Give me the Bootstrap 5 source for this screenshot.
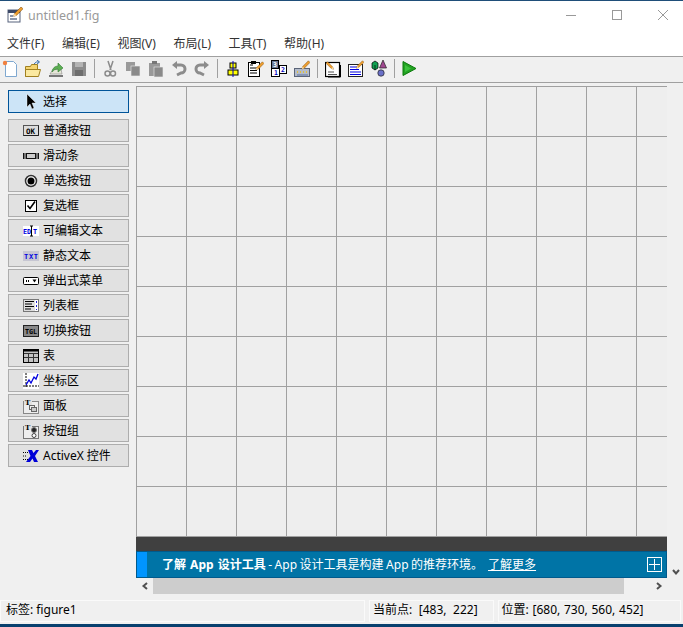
<!DOCTYPE html>
<html lang="zh-CN">
<head>
    <meta charset="UTF-8">
    <meta name="viewport" content="width=device-width, initial-scale=1.0">
    <title>untitled1.fig</title>
    <link rel="stylesheet" href="https://cdn.jsdelivr.net/npm/bootstrap@5.3.0/dist/css/bootstrap.min.css">
    <style>
        html, body {
            height: 627px;
            overflow: hidden;
        }
        body {
            width: 683px;
            background: #f0f0f0;
            color: #000;
            font-family: "Noto Sans", "Noto Sans CJK SC", sans-serif;
            font-size: 12px;
            line-height: 16px;
        }
        svg { display: block; flex: none; }
        .win-title {
            height: 31px;
            background: #fff;
            border-top: 1px solid #1f4e79;
            padding: 6px 0 0 7px;
        }
        .win-name { color: #999; margin-left: 5px; font-size: 12.5px; padding-top: 1px; }
        .win-btns { gap: 30px; padding: 3px 12px 0 0; }
        .win-menu {
            height: 26px;
            background: #fff;
            border-bottom: 1px solid #a0a0a0;
            padding: 5px 0 0 7px;
            gap: 17.6px;
            color: #333;
        }
        .tool-row {
            height: 26px;
            border-bottom: 1px solid #a0a0a0;
            padding: 3px 0 0 2px;
            gap: 7px;
        }
        .tool-sep { width: 1px; height: 19px; margin-top: -1px; background: #a0a0a0; }
        .main-area { height: 515px; }
        .palette { width: 136px; padding: 7px 0 0 8px; gap: 2px; flex: none; }
        .pal-btn {
            width: 121px;
            height: 23px;
            padding: 0 0 0 14px;
            gap: 4px;
            background: #e1e1e1;
            border: 1px solid #adadad;
            border-radius: 0;
            font-size: 12px;
            line-height: 16px;
            color: #000;
            white-space: nowrap;
        }
        .pal-btn.picked {
            background: #cce4f7;
            border-color: #005499;
            margin-bottom: 4px;
        }
        .design-col { width: 531px; padding-top: 3px; flex: none; }
        .grid-canvas {
            height: 452px;
            background-color: #eee;
            background-image:
                linear-gradient(#a0a0a0 1px, transparent 1px),
                linear-gradient(90deg, #a0a0a0 1px, transparent 1px);
            background-size: 50px 50px;
        }
        .dark-strip { height: 14px; background: #404040; margin-top: -1px; }
        .app-banner {
            height: 27px;
            background: #0074a6;
            border: 1px solid #005a8c;
            color: #fff;
            padding-right: 4px;
        }
        .banner-mark { width: 10px; height: 100%; background: #0095ff; margin-right: 15px; }
        .banner-msg { white-space: nowrap; word-spacing: -.6px; }
        .banner-msg b { word-spacing: 1px; }
        .banner-msg a { color: #fff; margin-left: 5px; }
        .h-scroll { height: 16px; }
        .h-arrow { width: 17px; }
        .h-track { width: 471px; height: 16px; background: #cdcdcd; }
        .v-scroll { width: 16px; padding: 0 0 0 5px; }
        .v-down { margin-top: 485px; }
        .status-row { height: 22px; margin-top: 2px; gap: 4px; padding-right: 2px; }
        .status-cell {
            border: 1px solid #fafafa;
            padding: 1px 0 0 5px;
            white-space: nowrap;
        }
        .status-a { width: 366px; }
        .status-b { width: 125px; padding-left: 3px; word-spacing: 3.500px; }
        .status-c { width: 184px; padding-left: 3px; word-spacing: .6px; }
        .task-edge { height: 4px; margin-top: 2px; background: #08406e; }
        .ico-txt { font-family: "DejaVu Sans Mono", monospace; font-weight: 700; }
    </style>
</head>
<body>
    <svg width="0" height="0" class="position-absolute">
        <symbol id="pencil" viewBox="0 0 16 16">
            <path d="M14 1l2 2-7 7-3 1 1-3z" fill="#f0a030" stroke="#7a4a10" stroke-width=".6"/>
            <path d="M6 11l1-3 2 2z" fill="#fbe0a8"/>
        </symbol>
    </svg>

    <div class="win-title d-flex justify-content-between">
        <div class="d-flex">
            <svg width="16" height="16" viewBox="0 0 16 16">
                <rect x="1" y="3" width="12" height="12" fill="#fff" stroke="#56627c"/>
                <rect x="1" y="3" width="12" height="3" fill="#3d4a68"/>
                <rect x="3" y="8" width="3" height="2" fill="#8c96aa"/>
                <rect x="3" y="11" width="7" height="2" fill="#8c96aa"/>
                <use href="#pencil" x="1" y="-1" width="15" height="15"/>
            </svg>
            <span class="win-name">untitled1.fig</span>
        </div>
        <div class="win-btns d-flex">
            <svg width="16" height="11" viewBox="0 0 16 11"><path d="M3 5.5h10" stroke="#999"/></svg>
            <svg width="16" height="11" viewBox="0 0 16 11"><rect x="3.5" y=".5" width="9" height="9" fill="none" stroke="#999"/></svg>
            <svg width="16" height="11" viewBox="0 0 16 11"><path d="M3 0l10 10M13 0L3 10" stroke="#999"/></svg>
        </div>
    </div>

    <div class="win-menu d-flex">
        <span>文件(F)</span><span>编辑(E)</span><span>视图(V)</span><span>布局(L)</span><span>工具(T)</span><span>帮助(H)</span>
    </div>

    <div class="tool-row d-flex">
        <svg width="16" height="18" viewBox="0 0 16 18"><path d="M3.5 1.5h8l3 3v12h-11z" fill="#fff" stroke="#7fa8d0"/><circle cx="3" cy="3" r="2.2" fill="#f08040"/></svg>
        <svg width="16" height="18" viewBox="0 0 16 18"><path d="M.5 6.5h5l1-2h6v12H.5z" fill="#f4d470" stroke="#a08020"/><path d="M.5 9.5h15l-2 7H.5z" fill="#fbe9a0" stroke="#a08020"/><path d="M9 4q2-3 5-2M12 0l2.500 2-2.500 2" fill="none" stroke="#3a70b0"/></svg>
        <svg width="16" height="18" viewBox="0 0 16 18"><path d="M1 15h14v2H1z" fill="#777"/><path d="M2 14l3-5h8l1 5z" fill="#e6e6d8" stroke="#888" stroke-width=".6"/><path d="M4 12q1-6 6-6V3l5 5-5 4V9q-4 0-6 3z" fill="#5cae52" stroke="#2f7a30" stroke-width=".6"/></svg>
        <svg width="16" height="18" viewBox="0 0 16 18"><path d="M1 2h14v14H1z" fill="#8c8c8c"/><rect x="4" y="2" width="8" height="5" fill="#b4b4b4"/><rect x="4" y="10" width="8" height="6" fill="#6e6e6e"/></svg>
        <div class="tool-sep"></div>
        <svg width="16" height="18" viewBox="0 0 16 18"><path d="M6 1l3 9M11 1L8 10" stroke="#8c8c8c" stroke-width="1.500"/><circle cx="5.500" cy="13.500" r="2.500" fill="none" stroke="#8c8c8c" stroke-width="1.500"/><circle cx="11" cy="13.500" r="2.500" fill="none" stroke="#8c8c8c" stroke-width="1.500"/></svg>
        <svg width="16" height="18" viewBox="0 0 16 18"><rect x="1" y="2" width="9" height="9" fill="#999"/><rect x="6" y="6" width="9" height="10" fill="#8a8a8a" stroke="#eee" stroke-width=".6"/></svg>
        <svg width="16" height="18" viewBox="0 0 16 18"><rect x="1" y="3" width="11" height="13" fill="#999"/><rect x="4" y="1" width="5" height="3" fill="#777"/><rect x="6" y="7" width="9" height="10" fill="#8a8a8a" stroke="#eee" stroke-width=".6"/></svg>
        <svg width="16" height="18" viewBox="0 0 16 18"><path d="M5 5h5a3.500 3.500 0 0 1 0 8l-4 2" fill="none" stroke="#8c8c8c" stroke-width="3"/><path d="M6 1v8L1 5z" fill="#8c8c8c"/></svg>
        <svg width="16" height="18" viewBox="0 0 16 18"><path d="M11 5H6a3.500 3.500 0 0 0 0 8l4 2" fill="none" stroke="#8c8c8c" stroke-width="3"/><path d="M10 1v8l5-4z" fill="#8c8c8c"/></svg>
        <div class="tool-sep"></div>
        <svg width="16" height="18" viewBox="0 0 16 18"><rect x="5" y="3" width="6" height="5" fill="#ffff00" stroke="#000"/><rect x="3" y="10" width="10" height="5" fill="#ffff00" stroke="#000"/><path d="M8 1v16" stroke="#0000c0"/></svg>
        <svg width="16" height="18" viewBox="0 0 16 18"><rect x=".5" y="2.500" width="11" height="14" fill="#fff" stroke="#000"/><path d="M2 5h3M2 8h7M2 10.500h7M2 13h7" stroke="#000" stroke-width="1.200"/><rect x="3" y="1" width="5" height="3" fill="#000"/><use href="#pencil" x="3" y="1" width="13" height="13"/></svg>
        <svg width="16" height="18" viewBox="0 0 16 18">
            <rect x=".5" y=".5" width="7" height="8" fill="#6a7a96" stroke="#000"/><rect x=".5" y="8.500" width="8" height="8" fill="#fff" stroke="#000"/><rect x="8.500" y="5.500" width="7" height="8" fill="#fff" stroke="#000"/>
            <text x="2" y="7" class="ico-txt" font-size="6.500" fill="#fff">3</text>
            <text x="3" y="15" class="ico-txt" font-size="6.500" fill="#0000c0">1</text>
            <text x="10" y="12" class="ico-txt" font-size="6.500" fill="#0000c0">2</text>
        </svg>
        <svg width="16" height="18" viewBox="0 0 16 18"><rect x=".5" y="8.500" width="15" height="8" fill="#b4bccb" stroke="#5a6478"/><path d="M3 12h1M6 12h1M9 12h1M12 12h1" stroke="#e0c040" stroke-width="2"/><path d="M3 15h11" stroke="#5a70a0"/><use href="#pencil" x="3" y="0" width="13" height="13"/></svg>
        <div class="tool-sep"></div>
        <svg width="16" height="18" viewBox="0 0 16 18"><rect x=".5" y="2.500" width="14" height="14" fill="#fff" stroke="#000" stroke-width="1.200"/><path d="M3 12h6M3 14.500h9" stroke="#555"/><path d="M15.500 5v12H3" fill="none" stroke="#000"/><use href="#pencil" x="0" y="0" width="12" height="12" transform="matrix(-1 0 0 1 13 1)"/></svg>
        <svg width="16" height="18" viewBox="0 0 16 18"><rect x=".5" y="4.500" width="14" height="12" fill="#fff" stroke="#222"/><path d="M2 7h8M2 9.500h9M2 12h11M2 14.500h11" stroke="#0000e0" stroke-width="1.200"/><use href="#pencil" x="4" y="0" width="12" height="12"/></svg>
        <svg width="16" height="18" viewBox="0 0 16 18"><path d="M1 3l3-2 3 2v5l-3 2-3-2z" fill="#10a050" stroke="#000" stroke-width=".7"/><path d="M4 5v5" stroke="#000" stroke-width=".7"/><path d="M12 0l3.500 8h-7z" fill="#a04890" stroke="#222" stroke-width=".7"/><circle cx="10" cy="13" r="3.200" fill="#6a70c8" stroke="#222" stroke-width=".7"/></svg>
        <div class="tool-sep"></div>
        <svg width="16" height="18" viewBox="0 0 16 18"><path d="M1 1.500l13 7-13 7z" fill="#23a323" stroke="#0a7a0a"/><path d="M3 5v7l6-3.500z" fill="#3cc23c"/></svg>
    </div>

    <div class="main-area d-flex">
        <div class="palette d-flex flex-column">
            <button class="btn pal-btn picked d-flex align-items-center">
                <svg width="16" height="16" viewBox="0 0 16 16"><path d="M4 0v13l3-3 2 5 2-1-2-5h4z" fill="#000" stroke="#fff" stroke-width=".4"/></svg><span>选择</span>
            </button>
            <button class="btn pal-btn d-flex align-items-center">
                <svg width="16" height="16" viewBox="0 0 16 16"><rect x=".5" y="2.500" width="15" height="10" fill="#ddd" stroke="#555"/><path d="M.5 12.500h15v-10" fill="none" stroke="#222"/><text x="3" y="10.500" class="ico-txt" font-size="7.500">OK</text></svg><span>普通按钮</span>
            </button>
            <button class="btn pal-btn d-flex align-items-center">
                <svg width="16" height="16" viewBox="0 0 16 16"><rect x="0" y="5" width="16" height="6" fill="#111"/><rect x="4" y="6" width="8" height="4" fill="#ccc"/><path d="M2 5v6M14 5v6" stroke="#ddd"/></svg><span>滑动条</span>
            </button>
            <button class="btn pal-btn d-flex align-items-center">
                <svg width="16" height="16" viewBox="0 0 16 16"><circle cx="8" cy="8" r="5.500" fill="#fff" stroke="#333" stroke-width="1.500"/><circle cx="8" cy="8" r="3.500" fill="#000"/></svg><span>单选按钮</span>
            </button>
            <button class="btn pal-btn d-flex align-items-center">
                <svg width="16" height="16" viewBox="0 0 16 16"><rect x="2.500" y="2.500" width="11" height="11" fill="#fff" stroke="#000"/><path d="M4.500 7.500l2.500 3 5-7" fill="none" stroke="#000" stroke-width="1.600"/></svg><span>复选框</span>
            </button>
            <button class="btn pal-btn d-flex align-items-center">
                <svg width="16" height="16" viewBox="0 0 16 16"><rect x="0" y="3" width="16" height="10" fill="#fff"/><text x="0" y="10.800" class="ico-txt" font-size="6.800" fill="#0000e0" textLength="8">ED</text><text x="10" y="10.800" class="ico-txt" font-size="6.800" fill="#0000e0">T</text><path d="M8.500 3v10M7 3h3M7 13h3" stroke="#000"/></svg><span>可编辑文本</span>
            </button>
            <button class="btn pal-btn d-flex align-items-center">
                <svg width="16" height="16" viewBox="0 0 16 16"><rect x="0" y="3" width="16" height="10" fill="#c6c6d2"/><text x="1" y="10.800" class="ico-txt" font-size="7" fill="#0000e0" textLength="14">TXT</text></svg><span>静态文本</span>
            </button>
            <button class="btn pal-btn d-flex align-items-center">
                <svg width="16" height="16" viewBox="0 0 16 16"><rect x=".5" y="4.500" width="15" height="7" rx="1" fill="#fff" stroke="#000"/><path d="M3 8h4" stroke="#000" stroke-width="2" stroke-dasharray="1 1"/><path d="M9.500 6.500h4l-2 3z" fill="#000"/></svg><span>弹出式菜单</span>
            </button>
            <button class="btn pal-btn d-flex align-items-center">
                <svg width="16" height="16" viewBox="0 0 16 16"><rect x=".5" y="1.500" width="15" height="12" fill="#ddd" stroke="#777"/><path d="M2 3.500h9M2 6h7M2 8.500h9M2 11h6" stroke="#000" stroke-width="1.200"/><rect x="12" y="2" width="3" height="11" fill="#fff"/><path d="M13.500 3v9" stroke="#2020d0" stroke-dasharray="2 2"/></svg><span>列表框</span>
            </button>
            <button class="btn pal-btn d-flex align-items-center">
                <svg width="16" height="16" viewBox="0 0 16 16"><rect x=".5" y="2.500" width="15" height="11" fill="#888" stroke="#222"/><text x="2" y="10.800" class="ico-txt" font-size="6.800" fill="#000" textLength="12">TGL</text></svg><span>切换按钮</span>
            </button>
            <button class="btn pal-btn d-flex align-items-center">
                <svg width="16" height="16" viewBox="0 0 16 16"><rect x=".5" y="1.500" width="15" height="13" fill="#c4c4c4" stroke="#000"/><path d="M1 5.500h14M1 9.500h14M5.500 5v9M10.500 5v9" stroke="#333"/><path d="M1 2.500h14" stroke="#000" stroke-width="2"/></svg><span>表</span>
            </button>
            <button class="btn pal-btn d-flex align-items-center">
                <svg width="16" height="16" viewBox="0 0 16 16"><rect width="16" height="16" fill="#fff"/><path d="M3 0v15M0 13h16" stroke="#000" stroke-dasharray="2 1"/><path d="M3 12l3-5 2 3 3-6 2 2 2-5" fill="none" stroke="#0000e0" stroke-width="1.300"/></svg><span>坐标区</span>
            </button>
            <button class="btn pal-btn d-flex align-items-center">
                <svg width="16" height="16" viewBox="0 0 16 16"><rect x=".5" y="3.500" width="15" height="12" fill="#eee" stroke="#888"/><rect x="1" y="0" width="8" height="7" fill="#e1e1e1"/><text x="2" y="6.500" font-family="DejaVu Serif" font-weight="700" font-size="7">T</text><rect x="6.500" y="7.500" width="5" height="4" fill="none" stroke="#666"/><rect x="8.500" y="9.500" width="5" height="4" fill="#ccc" stroke="#666"/></svg><span>面板</span>
            </button>
            <button class="btn pal-btn d-flex align-items-center">
                <svg width="16" height="16" viewBox="0 0 16 16"><rect x=".5" y="3.500" width="15" height="12" fill="#eee" stroke="#777"/><rect x="1" y="0" width="8" height="7" fill="#e1e1e1"/><text x="2" y="6.500" font-family="DejaVu Serif" font-weight="700" font-size="7">T</text><circle cx="11" cy="7" r="2.500" fill="#222" stroke="#777"/><circle cx="11" cy="12.500" r="2" fill="#fff" stroke="#444"/></svg><span>按钮组</span>
            </button>
            <button class="btn pal-btn d-flex align-items-center">
                <svg width="16" height="16" viewBox="0 0 16 16"><path d="M0 4.500h5M0 8h4M0 11.500h5" stroke="#000" stroke-dasharray="1 1"/><path d="M5 2h4l1.500 3L13 2h3l-4 6 3 6h-4l-1.500-3.500L7 14H3l4.500-6z" fill="#0000d8"/></svg><span>ActiveX 控件</span>
            </button>
        </div>

        <div class="design-col">
            <div class="grid-canvas"></div>
            <div class="dark-strip"></div>
            <div class="app-banner d-flex align-items-center">
                <div class="banner-mark"></div>
                <div class="banner-msg flex-grow-1"><b>了解 App 设计工具</b> - App 设计工具是构建 App 的推荐环境。<a href="#">了解更多</a></div>
                <svg width="15" height="15" viewBox="0 0 15 15"><rect x=".5" y=".5" width="14" height="14" fill="none" stroke="#fff"/><path d="M7.500 2v11M2 7.500h11" stroke="#fff"/></svg>
            </div>
            <div class="h-scroll d-flex">
                <div class="h-arrow d-flex align-items-center justify-content-center">
                    <svg width="8" height="8" viewBox="0 0 8 8"><path d="M6 1L2.500 4 6 7" fill="none" stroke="#505050" stroke-width="2"/></svg>
                </div>
                <div class="h-track"></div>
                <div class="h-arrow flex-grow-1 d-flex align-items-center justify-content-end pe-1">
                    <svg width="8" height="8" viewBox="0 0 8 8"><path d="M2 1l3.500 3L2 7" fill="none" stroke="#505050" stroke-width="2"/></svg>
                </div>
            </div>
        </div>

        <div class="v-scroll">
            <svg class="v-down" width="8" height="8" viewBox="0 0 8 8"><path d="M1 2l3 3.500L7 2" fill="none" stroke="#505050" stroke-width="2"/></svg>
        </div>
    </div>

    <div class="status-row d-flex">
        <div class="status-cell status-a">标签: figure1</div>
        <div class="status-cell status-b">当前点: [483, 222]</div>
        <div class="status-cell status-c">位置: [680, 730, 560, 452]</div>
    </div>
    <div class="task-edge"></div>
</body>
</html>
